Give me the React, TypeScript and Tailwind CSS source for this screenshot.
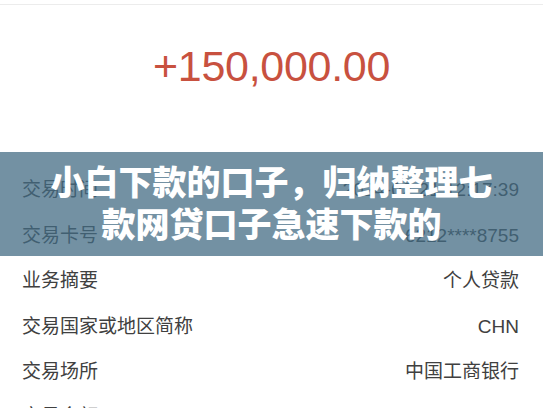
const rows = [
  { label: "交易时间", value: "2024-02-21 12:17:39" },
  { label: "交易卡号", value: "6212****8755" },
  { label: "业务摘要", value: "个人贷款" },
  { label: "交易国家或地区简称", value: "CHN" },
  { label: "交易场所", value: "中国工商银行" },
  { label: "交易金额", value: "150,000.00" },
];

export default function App() {
  return (
    <div
      className="relative w-full h-[408px] overflow-hidden bg-white"
      style={{ fontFamily: '"Liberation Sans", "Noto Sans CJK SC", sans-serif' }}
    >
      {/* 顶部分隔线 */}
      <div className="h-[5px] border-b border-[#ececec]" />

      {/* 金额 */}
      <div className="h-[163px] flex justify-center pt-[34px]">
        <span className="text-[43px] leading-[54px] tracking-[-0.3px] text-[#c8513f]">
          +150,000.00
        </span>
      </div>

      {/* 明细列表 */}
      <div>
        {rows.map((r) => (
          <div
            key={r.label}
            className="h-[45.4px] flex items-center justify-between pl-[22px] pr-[24px] text-[19px] text-[#404040]"
          >
            <span>{r.label}</span>
            <span>{r.value}</span>
          </div>
        ))}
      </div>

      {/* 标题横幅 */}
      <div className="absolute left-0 right-0 top-[152px] h-[104px] bg-[rgba(66,107,131,0.74)] flex flex-col items-center justify-center">
        <p className="text-white text-[34px] leading-[42px] font-black text-center">
          小白下款的口子，归纳整理七
        </p>
        <p className="text-white text-[34px] leading-[42px] font-black text-center">
          款网贷口子急速下款的
        </p>
      </div>
    </div>
  );
}
